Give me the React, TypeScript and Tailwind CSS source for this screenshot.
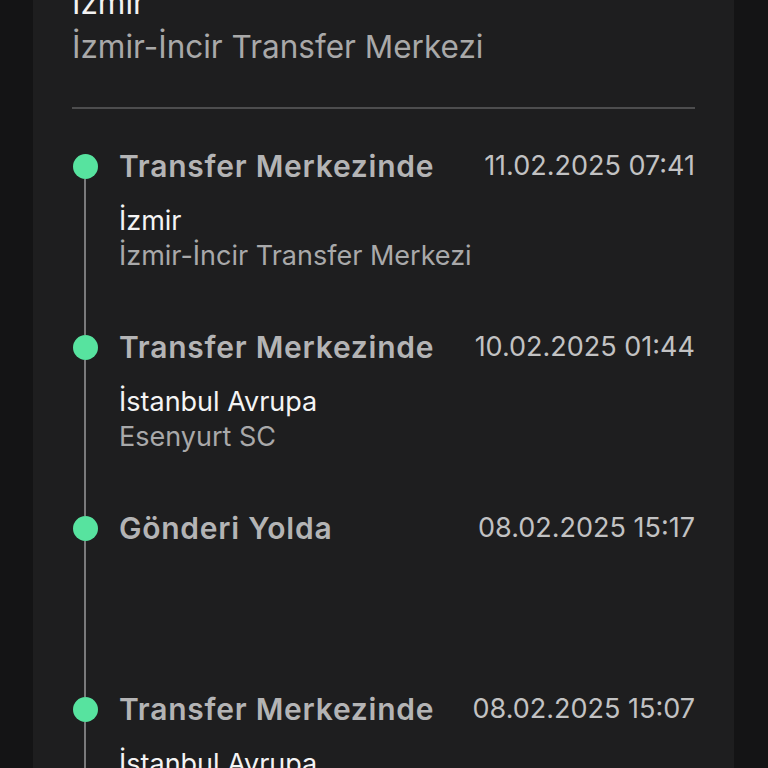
import React from "react";

type Item = { title: string; date: string; city?: string; place?: string };

const items: Item[] = [
  { title: "Transfer Merkezinde", date: "11.02.2025 07:41", city: "İzmir", place: "İzmir-İncir Transfer Merkezi" },
  { title: "Transfer Merkezinde", date: "10.02.2025 01:44", city: "İstanbul Avrupa", place: "Esenyurt SC" },
  { title: "Gönderi Yolda", date: "08.02.2025 15:17" },
  { title: "Transfer Merkezinde", date: "08.02.2025 15:07", city: "İstanbul Avrupa", place: "Esenyurt SC" },
];

export default function App() {
  return (
    <div
      className="w-[768px] h-[768px] overflow-hidden bg-[#141415] pl-[33px] pr-[34px]"
      style={{ fontFamily: "Inter, 'Noto Sans', sans-serif" }}
    >
      <div className="flex h-full flex-col overflow-hidden bg-[#1e1e1f] pl-[39px] pr-[39px]">
        <div className="-mt-[19px] text-[31.5px] leading-[44px]">
          <div className="text-[#f2f2f2]">İzmir</div>
          <div className="text-[#a9a9a9]">İzmir-İncir Transfer Merkezi</div>
        </div>
        <div className="mt-[38px] h-[2px] shrink-0 bg-[#4d4d4e]" />
        <div className="mt-[45px] flex flex-col">
          {items.map((it, i) => (
            <div key={i} className="flex h-[181px] shrink-0">
              <div className="flex w-[26px] flex-col items-center">
                <div className="h-[25px] w-[25px] shrink-0 rounded-full bg-[#57e39f]" />
                <div className="w-[2px] flex-1 bg-[#7a7a7b]" />
              </div>
              <div className="ml-[21px] flex-1">
                <div className="flex h-[25px] items-center justify-between">
                  <span className="text-[30px] font-semibold tracking-[0.025em] text-[#b4b4b5]">{it.title}</span>
                  <span className="text-[27px] text-[#c2c2c3]">{it.date}</span>
                </div>
                {it.city && (
                  <div className="mt-[24px] text-[27px] leading-[35px]">
                    <div className="text-[#f4f4f4]">{it.city}</div>
                    <div className="text-[#a9a9aa]">{it.place}</div>
                  </div>
                )}
              </div>
            </div>
          ))}
        </div>
      </div>
    </div>
  );
}
